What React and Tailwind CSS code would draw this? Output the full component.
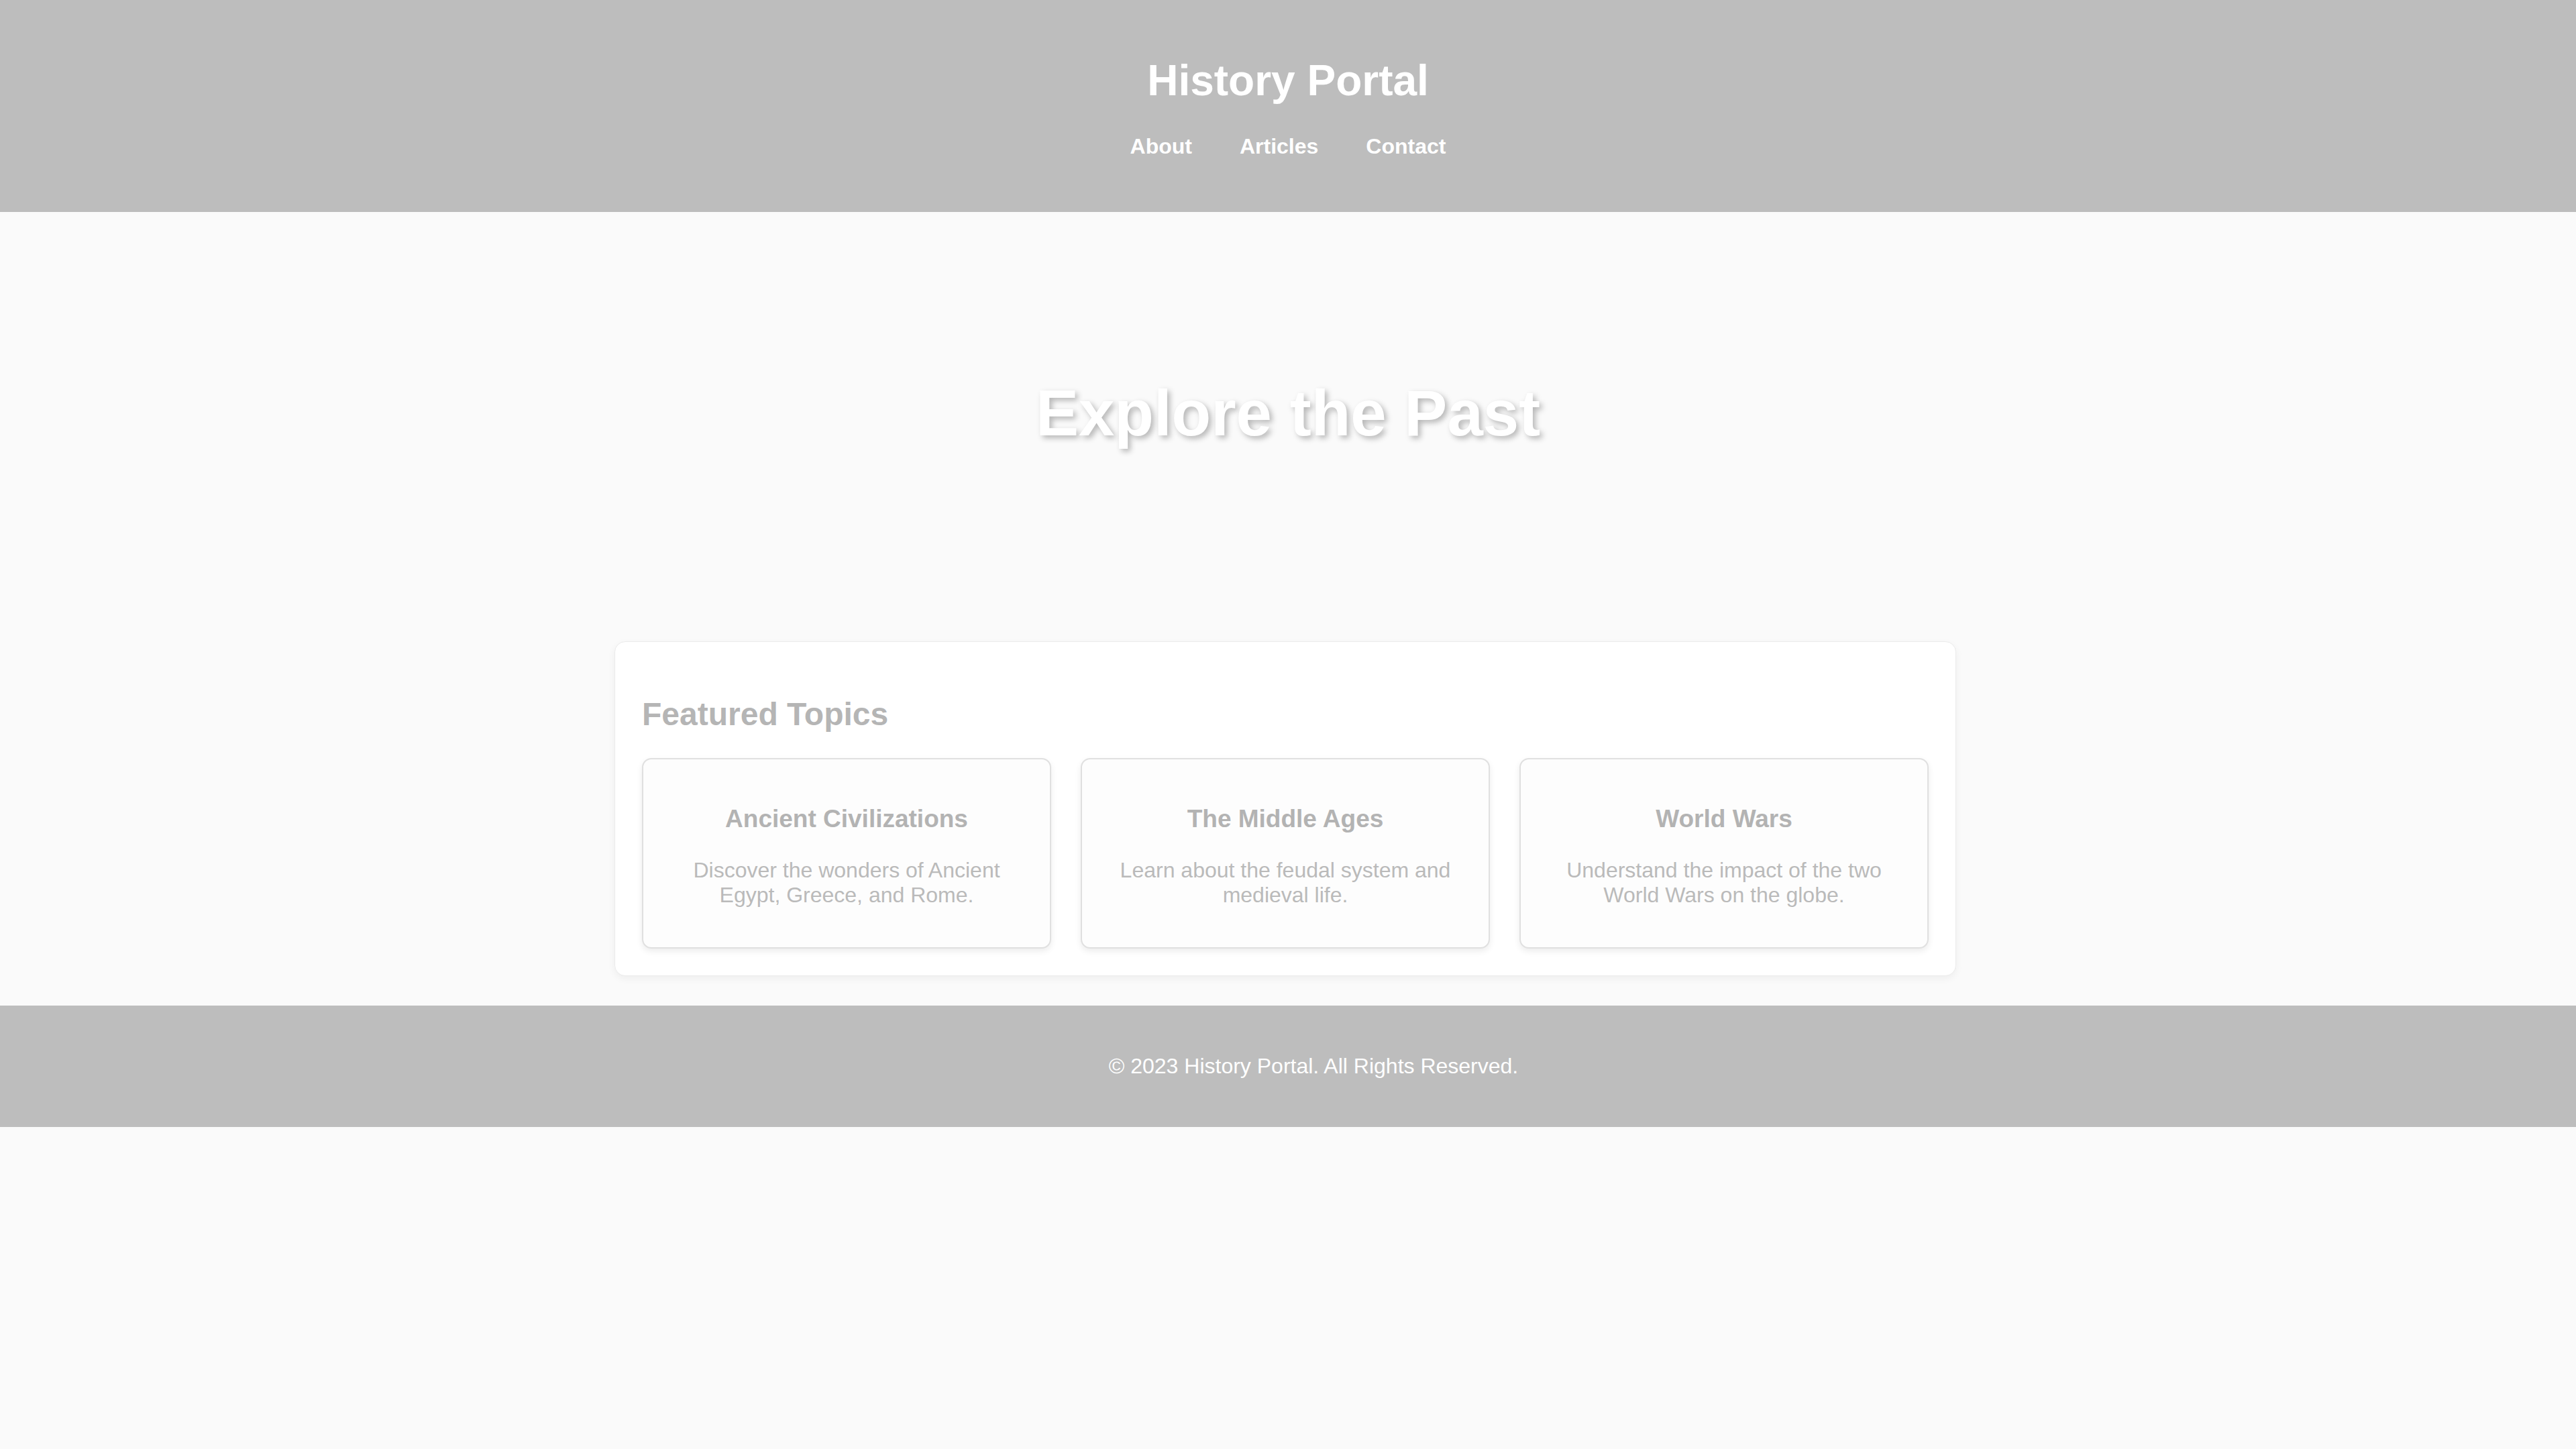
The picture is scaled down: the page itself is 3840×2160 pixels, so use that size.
import React from 'react';

const TOPICS = [
  {
    id: 1,
    title: 'Ancient Civilizations',
    text: 'Discover the wonders of Ancient Egypt, Greece, and Rome.',
  },
  {
    id: 2,
    title: 'The Middle Ages',
    text: 'Learn about the feudal system and medieval life.',
  },
  {
    id: 3,
    title: 'World Wars',
    text: 'Understand the impact of the two World Wars on the globe.',
  },
];

const NAV = ['About', 'Articles', 'Contact'];

const App = () => {
  return (
    <div className="min-h-screen bg-[#fafafa] font-['Liberation_Sans',Arial,sans-serif]">
      <header className="bg-[#bdbdbd] pt-[83px] pb-[79px] text-center text-white">
        <h1 className="text-[64px] font-bold leading-[74px]">History Portal</h1>
        <nav className="mt-[43px] flex justify-center gap-[71px] text-[32px] font-bold leading-[37px]">
          {NAV.map((item) => (
            <a key={item} href="#" className="text-white">
              {item}
            </a>
          ))}
        </nav>
      </header>

      <section className="flex h-[600px] items-center justify-center">
        <h2 className="text-[96px] font-bold leading-[110px] text-white [text-shadow:4px_4px_8px_rgba(0,0,0,0.28)]">
          Explore the Past
        </h2>
      </section>

      <div className="mt-[40px] pr-[8px]">
        <main className="mx-auto w-[2000px] rounded-[16px] border border-[#ebebeb] bg-white p-[40px] shadow-[0_4px_12px_rgba(0,0,0,0.05)]">
          <h2 className="mt-[40px] mb-[38px] text-[48px] font-bold leading-[55px] text-[#b5b5b5]">
            Featured Topics
          </h2>
          <div className="grid grid-cols-3 gap-[44px]">
            {TOPICS.map((topic) => (
              <article
                key={topic.id}
                className="rounded-[14px] border-2 border-[#e0e0e0] bg-[#fdfdfd] p-[30px] text-center shadow-[0_4px_10px_rgba(0,0,0,0.08)]"
              >
                <h3 className="mt-[37px] text-[37px] font-bold leading-[43px] text-[#b3b3b3]">{topic.title}</h3>
                <p className="mt-[37px] mb-[29px] text-[32px] leading-[37px] text-[#bababa]">{topic.text}</p>
              </article>
            ))}
          </div>
        </main>
      </div>

      <footer className="mt-[44px] bg-[#bdbdbd] py-[72px] pl-[76px] text-center text-[32px] leading-[37px] text-white">
        <p>© 2023 History Portal. All Rights Reserved.</p>
      </footer>
    </div>
  );
};

export default App;
